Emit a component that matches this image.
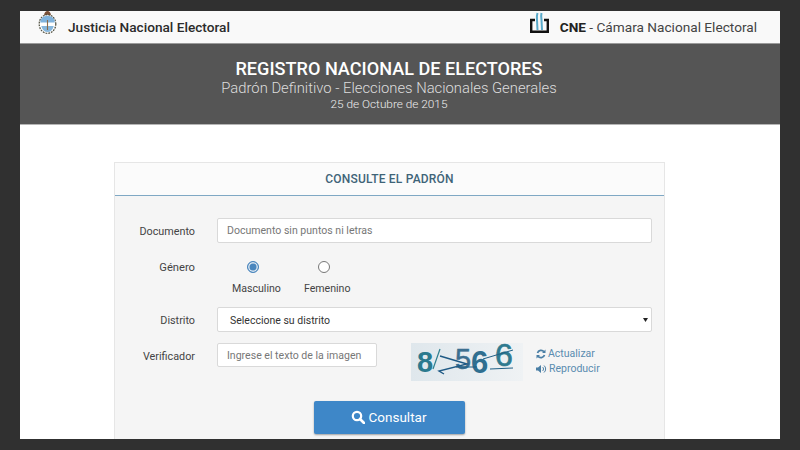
<div class="page">
  <div class="sheet">
    <header class="top">
      <div class="brand">
        <svg class="shield" width="19" height="23" viewBox="0 0 19 23">
          <path d="M6 4.500 Q6.500 0 9.500 0 Q12.500 0 13 4.500 Z" fill="#7a4f36"/>
          <ellipse cx="9.500" cy="13" rx="8.300" ry="9.300" fill="#fff" stroke="#4a4a3a" stroke-width="1.200" stroke-dasharray="1.800 1"/>
          <path d="M2.200 11.500 Q2.800 4.700 9.500 4.700 Q16.200 4.700 16.800 11.500 Z" fill="#7fb2dc"/>
          <path d="M3.200 15 Q5 21 9.500 21 Q14 21 15.800 15 Z" fill="#86b6dc"/>
          <path d="M9.500 9v10" stroke="#8a6a4a" stroke-width="1.100"/>
        </svg>
        <strong>Justicia Nacional Electoral</strong>
      </div>
      <div class="cne">
        <svg width="19" height="21" viewBox="0 0 19 21">
          <path d="M5 8H1.200v11.800h16.600V8H14" fill="none" stroke="#111" stroke-width="2.400"/>
          <path d="M7.500 1Q6.500 4 7 8L7.500 18" stroke="#58a9c9" stroke-width="2" fill="none"/>
          <path d="M11.500 1Q10.800 4 11.500 8L12 18" stroke="#58a9c9" stroke-width="2" fill="none"/>
        </svg>
        <span><b>CNE</b> - Cámara Nacional Electoral</span>
      </div>
    </header>

    <section class="banner">
      <h1>REGISTRO NACIONAL DE ELECTORES</h1>
      <p class="sub">Padrón Definitivo - Elecciones Nacionales Generales</p>
      <p class="date">25 de Octubre de 2015</p>
    </section>

    <main class="content">
      <div class="panel">
        <div class="head">CONSULTE EL PADRÓN</div>
        <div class="body">
          <div class="row r-doc">
            <label for="doc">Documento</label>
            <input id="doc" class="field" placeholder="Documento sin puntos ni letras" />
          </div>

          <div class="row r-gen">
            <span class="lab">Género</span>
            <div class="radios">
              <div class="radio">
                <span class="dot on"></span>
                <span>Masculino</span>
              </div>
              <div class="radio">
                <span class="dot"></span>
                <span>Femenino</span>
              </div>
            </div>
          </div>

          <div class="row r-dis">
            <span class="lab">Distrito</span>
            <div class="field select">
              <span>Seleccione su distrito</span>
              <svg width="5" height="4" viewBox="0 0 5 4"><path d="M0 0h5L2.500 4z" fill="#222"/></svg>
            </div>
          </div>

          <div class="row r-ver">
            <label for="ver">Verificador</label>
            <input id="ver" class="field short" placeholder="Ingrese el texto de la imagen" />
            <svg class="captcha" width="112" height="38" viewBox="0 0 112 38">
              <defs>
                <linearGradient id="capbg">
                  <stop offset="0" stop-color="#dfe7ec"/>
                  <stop offset="1" stop-color="#eff2f4"/>
                </linearGradient>
              </defs>
              <rect width="112" height="38" fill="url(#capbg)"/>
              <text x="6" y="29" class="cap c1">8</text>
              <text x="44" y="26" class="cap c2">5</text>
              <text x="60" y="30" class="cap c4">6</text>
              <text x="84" y="23" class="cap c3">6</text>
              <path d="M29 6 L22 26" stroke="#2f7f8f" stroke-width="1.200"/>
              <path d="M29 13 L56 21 L28 28 L33 31" stroke="#1f5a85" stroke-width="1.400" fill="none"/>
              <path d="M45 24 H66 M72 16 L102 7 M79 26 L102 25" stroke="#1f5f85" stroke-width="1" fill="none"/>
            </svg>
            <div class="links">
              <span class="link">
                <svg width="10" height="10" viewBox="0 0 10 10"><path d="M1.500 4A3.700 3.700 0 0 1 8 2.800M8.500 6A3.700 3.700 0 0 1 2 7.200" fill="none" stroke="#4b7fa5" stroke-width="1.700"/><path d="M9.500 .5v3.500H6zM.5 9.500V6H4z" fill="#4b7fa5"/></svg>
                Actualizar
              </span>
              <span class="link">
                <svg width="11" height="10" viewBox="0 0 11 10"><path d="M0 3.500h2L5 1v8L2 6.500H0z" fill="#4b7fa5"/><path d="M6.500 3a2.500 2.500 0 0 1 0 4M8 1.500a4.500 4.500 0 0 1 0 7" fill="none" stroke="#4b7fa5"/></svg>
                Reproducir
              </span>
            </div>
          </div>

          <div class="actions">
            <button type="button">
              <svg width="14" height="14" viewBox="0 0 14 14"><circle cx="6" cy="6" r="4.200" fill="none" stroke="#fff" stroke-width="2.200"/><path d="M9 9l4 4" stroke="#fff" stroke-width="2.600" stroke-linecap="round"/></svg>
              Consultar
            </button>
          </div>
        </div>
      </div>
    </main>
  </div>
</div>

<style>
  :global(body) {
    margin: 0;
    background: #303030;
  }
  .page {
    width: 800px;
    height: 450px;
    box-sizing: border-box;
    padding: 11px 20px;
    background: #303030;
    font-family: Roboto, "Liberation Sans", sans-serif;
    overflow: hidden;
  }
  .sheet {
    height: 428px;
    background: #fff;
    overflow: hidden;
  }
  .top {
    height: 32px;
    display: flex;
    justify-content: space-between;
    align-items: center;
    padding: 0 23px 0 18px;
    background: #f9f9f9;
    border-bottom: 1px solid #9a9a9a;
    font-size: 13.650px;
    color: #222;
  }
  .brand {
    display: flex;
    align-items: center;
    gap: 11px;
  }
  .brand strong {
    font-weight: 500;
    color: #2b2b2b;
  }
  .shield {
    margin-top: -9px;
  }
  .cne {
    display: flex;
    align-items: center;
    gap: 11px;
    color: #444;
  }
  .cne svg {
    margin-top: -9px;
  }
  .cne b {
    font-weight: 700;
    color: #222;
  }
  .banner {
    height: 81px;
    box-sizing: border-box;
    padding: 14px 22px 0 0;
    background: #555;
    border-bottom: 1px solid #b5b5b5;
    text-align: center;
    color: #fff;
  }
  .banner h1 {
    margin: 0;
    font-size: 18.100px;
    line-height: 22px;
    font-weight: 500;
  }
  .sub {
    margin: 0;
    font-size: 14.800px;
    line-height: 17px;
    font-weight: 300;
    color: #ddd;
  }
  .date {
    margin: 0;
    font-size: 11.800px;
    line-height: 15px;
    font-weight: 300;
    color: #eee;
  }
  .content {
    padding: 37px 115px 0 94px;
  }
  .panel {
    height: 300px;
    box-sizing: border-box;
    border: 1px solid #e6e6e6;
    background: #f5f5f5;
  }
  .head {
    height: 32px;
    line-height: 33px;
    text-align: center;
    background: #fbfbfb;
    border-bottom: 1px solid #7fa8c4;
    font-size: 12px;
    font-weight: 500;
    color: #3f6478;
    letter-spacing: .2px;
  }
  .body {
    padding: 22px 12px 0 0;
  }
  .row {
    display: flex;
    font-size: 10.600px;
    color: #444;
  }
  .row > label, .lab {
    width: 80px;
    margin-right: 22px;
    text-align: right;
    font-size: 10.800px;
  }
  .r-doc {
    height: 25px;
  }
  .r-doc label {
    line-height: 28px;
  }
  .r-gen {
    margin-top: 18px;
    height: 46px;
  }
  .r-gen .lab {
    line-height: 13px;
    font-size: 11.200px;
  }
  .r-dis {
    height: 25px;
  }
  .r-dis .lab {
    line-height: 28px;
  }
  .r-ver {
    margin-top: 11px;
    height: 38px;
  }
  .r-ver label {
    line-height: 28px;
  }
  .field {
    box-sizing: border-box;
    flex: 1;
    height: 25px;
    border: 1px solid #d9d9d9;
    border-radius: 2px;
    background: #fff;
    padding: 0 9px;
    font: 10.550px Roboto, sans-serif;
    color: #444;
    outline: none;
  }
  .field::placeholder {
    color: #777;
    opacity: 1;
  }
  .short {
    flex: none;
    width: 160px;
    height: 24px;
  }
  .select {
    display: flex;
    align-items: center;
    justify-content: space-between;
    padding: 1px 3px 0 12px;
    color: #333;
    font-size: 10.500px;
  }
  .radios {
    display: flex;
    margin-left: 15px;
    gap: 23px;
  }
  .radio {
    display: flex;
    flex-direction: column;
    align-items: center;
    gap: 9px;
    line-height: 13px;
  }
  .dot {
    box-sizing: border-box;
    width: 12px;
    height: 12px;
    margin-right: 7px;
    border-radius: 50%;
    border: 1px solid #777;
    background: #fff;
  }
  .dot.on {
    border-color: #4a86bd;
    box-shadow: inset 0 0 0 1.500px #dbe7f2;
    background: #4a86bd;
  }
  .captcha {
    margin-left: 34px;
    flex: none;
    overflow: visible;
  }
  .cap {
    font: 700 29px "Liberation Sans", sans-serif;
  }
  .c1 {
    fill: #2b7a8e;
  }
  .c2 {
    fill: #3c6f90;
    font-weight: 400;
    stroke: #3c6f90;
    stroke-width: .5px;
  }
  .c3 {
    fill: #2f7a8f;
    font-size: 32px;
    font-weight: 400;
    stroke: #2f7a8f;
    stroke-width: .7px;
  }
  .c4 {
    fill: #2f6f90;
    font-size: 31px;
  }
  .links {
    margin-left: 13px;
    padding-top: 4px;
    display: flex;
    flex-direction: column;
    gap: 1px;
    font-size: 10.500px;
    line-height: 14px;
    color: #5a8cb0;
  }
  .link {
    display: flex;
    align-items: center;
    gap: 2px;
  }
  .actions {
    margin-top: 20px;
    padding-left: 199px;
  }
  button {
    display: flex;
    align-items: center;
    justify-content: center;
    gap: 4px;
    width: 151px;
    height: 33px;
    padding: 0 2px 2px 0;
    border: 0;
    border-radius: 2px;
    background: #3e87c8;
    box-shadow: 0 1px 2px rgba(0,0,0,.35);
    color: #fff;
    font: 13.500px Roboto, sans-serif;
  }
</style>
